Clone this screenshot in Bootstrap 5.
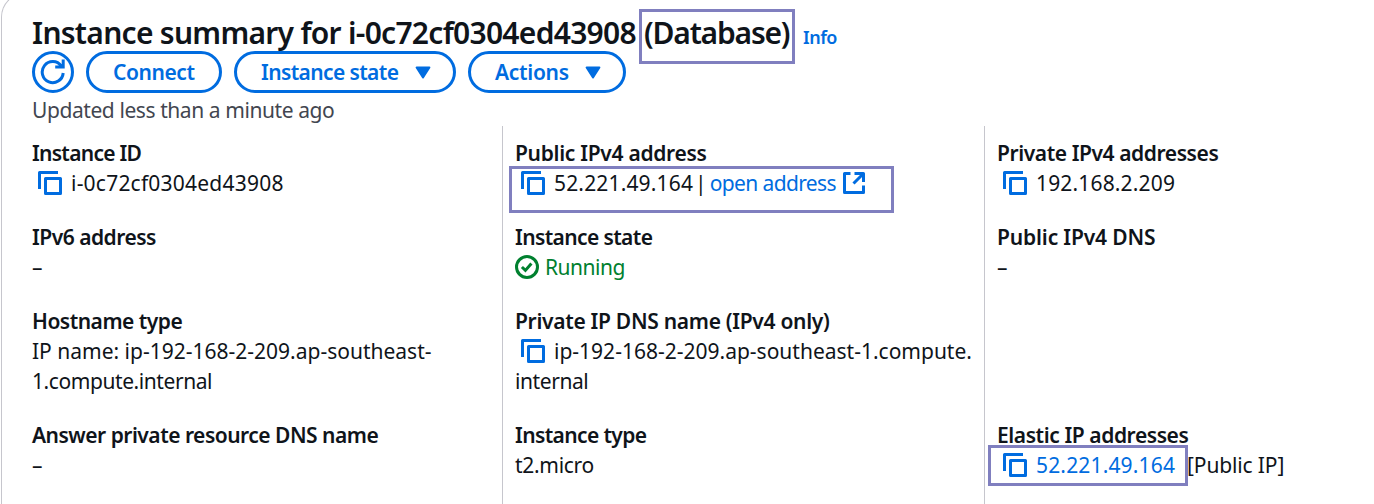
<!DOCTYPE html>
<html lang="en">
<head>
<meta charset="utf-8">
<meta name="viewport" content="width=device-width, initial-scale=1">
<title>Instance summary</title>
<link href="https://cdn.jsdelivr.net/npm/bootstrap@5.3.0/dist/css/bootstrap.min.css" rel="stylesheet">
<style>
  :root { --link: #006ce0; --ink: #0f141a; --rule: #c6c6cd; --mark: #807fbf; }
  body { font-family: "Noto Sans", sans-serif; font-size: 21px; line-height: 30px; color: var(--ink); background: #fff; }
  .panel { margin: -7px 0 0 1px; height: 511px; border: 1px solid var(--rule); border-width: 1px 0 0 1px; border-radius: 24px 0 0 0; padding: 21px 0 0 30px; }
  .panel h1 { font-size: 30px; line-height: 36px; height: 36px; font-weight: 600; white-space: nowrap; }
  .panel a { color: var(--link); text-decoration: none; }
  .title { width: 612px; }
  .dbname { width: 146px; }
  .info { font-size: 18px; font-weight: 600; margin-left: 13px; }
  .toolbar { gap: 12px; }
  .btn-pill { --bs-btn-color: var(--link); --bs-btn-border-color: var(--link); --bs-btn-border-width: 3px; --bs-btn-border-radius: 21px; --bs-btn-font-weight: 600; --bs-btn-font-size: 21px; --bs-btn-padding-x: 24px; --bs-btn-padding-y: 0; height: 42px; line-height: 30px; white-space: nowrap; display: inline-flex; align-items: center; }
  .btn-pill.justify-content-between { padding-right: 22px; }
  .btn-round { width: 42px; --bs-btn-padding-x: 0; justify-content: center; }
  .btn-round svg { flex: none; }
  .w-connect { width: 136px; }
  .w-state { width: 222px; }
  .w-actions { width: 158px; }
  .updated { color: #424650; margin: 2px 0 1px; }
  .grid-row { display: grid; grid-template-columns: 470px 482px 1fr; }
  .grid-row .cell { padding-bottom: 24px; white-space: nowrap; }
  .cell + .cell { border-left: 1px solid var(--rule); padding-left: 12px; }
  .grid-row:first-child .cell { padding-top: 12px; }
  .grid-row:last-child .cell { padding-bottom: 24px; }
  .term { font-weight: 600; }
  .copy { width: 24px; height: 24px; margin: 0 9px 0 6px; flex: none; }
  .ok { color: #00802f; }
  .run { margin-left: 6px; }
  .bar { margin: 0 3px 0 2px; }
  .ext { margin-left: 7px; }
  .pub { margin-left: 12px; }
  .boxed { position: relative; }
  .boxed::after { content: ""; position: absolute; border: 3px solid var(--mark); pointer-events: none; }
  .box-name::after { left: -5px; top: -6px; width: 156px; height: 55px; }
  .box-ip::after { left: -6px; top: -2px; width: 385px; height: 47px; }
  .box-eip::after { left: -9px; top: -5px; width: 200px; height: 41px; }
  .t0 { letter-spacing: -1.2px } .t1 { letter-spacing: -.72px } .t2 { letter-spacing: -.62px }
  .t3 { letter-spacing: -.5px } .t4 { letter-spacing: -.42px } .t5 { letter-spacing: -.3px }
  .t6 { letter-spacing: -.14px } .t7 { letter-spacing: .16px } .t8 { letter-spacing: .22px }
</style>
</head>
<body>
<svg class="d-none">
  <symbol id="i-copy" viewBox="0 0 24 24"><path d="M1.5 18V1.5H20" fill="none" stroke="#006ce0" stroke-width="3" stroke-linejoin="round"/><rect x="7.5" y="7.5" width="15" height="15" fill="none" stroke="#006ce0" stroke-width="3" stroke-linejoin="round"/></symbol>
  <symbol id="i-caret" viewBox="0 0 16 13"><path d="M1.6 1.5h12.8L8 11.5z" fill="#006ce0" stroke="#006ce0" stroke-width="2" stroke-linejoin="round"/></symbol>
</svg>
<main class="panel">
  <h1 class="d-flex align-items-baseline mb-0"><span class="t1 title">Instance summary for i-0c72cf0304ed43908</span><span class="boxed box-name t0 dbname">(Database)</span><a href="#" class="info t3">Info</a></h1>
  <div class="d-flex toolbar">
    <button class="btn btn-pill btn-round" aria-label="Refresh"><svg width="26" height="26" viewBox="0 0 26 26" fill="none" stroke="#006ce0" stroke-width="3"><path d="M23.2 14A10.5 10.5 0 1 1 21.3 7M23.2.5V8H15.2"/></svg></button>
    <button class="btn btn-pill w-connect"><span class="t4">Connect</span></button>
    <button class="btn btn-pill w-state justify-content-between"><span class="t2">Instance state</span><svg width="16" height="13"><use href="#i-caret"/></svg></button>
    <button class="btn btn-pill w-actions justify-content-between"><span class="t5">Actions</span><svg width="16" height="13"><use href="#i-caret"/></svg></button>
  </div>
  <div class="updated t4">Updated less than a minute ago</div>
  <section>
    <div class="grid-row">
      <div class="cell"><div class="term t1">Instance ID</div><div class="d-flex align-items-center"><svg class="copy"><use href="#i-copy"/></svg><span class="t8">i-0c72cf0304ed43908</span></div></div>
      <div class="cell"><div class="term t5">Public IPv4 address</div><div class="d-flex align-items-center boxed box-ip"><svg class="copy"><use href="#i-copy"/></svg><span class="t7">52.221.49.164</span><span class="bar">|</span><a href="#" class="t2">open address</a><svg class="ext" width="22" height="22" viewBox="0 0 22 22" fill="none" stroke="#006ce0" stroke-width="3" stroke-linejoin="round"><path d="M7.5 1.5h-6v19h19v-7M11.5 1.5h9V10M20 2l-9.5 9.5"/></svg></div></div>
      <div class="cell"><div class="term t4">Private IPv4 addresses</div><div class="d-flex align-items-center"><svg class="copy"><use href="#i-copy"/></svg><span class="t7">192.168.2.209</span></div></div>
    </div>
    <div class="grid-row">
      <div class="cell"><div class="term t3">IPv6 address</div><div>–</div></div>
      <div class="cell"><div class="term t2">Instance state</div><div class="d-flex align-items-center ok"><svg width="24" height="24" viewBox="0 0 24 24" fill="none" stroke="currentColor" stroke-width="3"><circle cx="12" cy="12" r="10.5"/><path d="m6.9 12 3.5 3.4 6-7"/></svg><span class="t3 run">Running</span></div></div>
      <div class="cell"><div class="term t6">Public IPv4 DNS</div><div>–</div></div>
    </div>
    <div class="grid-row">
      <div class="cell"><div class="term t3">Hostname type</div><div>IP name: ip-192-168-2-209.ap-southeast-<br><span class="t4">1.compute.internal</span></div></div>
      <div class="cell"><div class="term t5">Private IP DNS name (IPv4 only)</div><div class="d-flex align-items-center"><svg class="copy"><use href="#i-copy"/></svg><span>ip-192-168-2-209.ap-southeast-1.compute.</span></div><div class="t4">internal</div></div>
      <div class="cell"></div>
    </div>
    <div class="grid-row">
      <div class="cell"><div class="term t3">Answer private resource DNS name</div><div>–</div></div>
      <div class="cell"><div class="term t2">Instance type</div><div class="t5">t2.micro</div></div>
      <div class="cell"><div class="term t4">Elastic IP addresses</div><div class="d-flex align-items-center boxed box-eip"><svg class="copy"><use href="#i-copy"/></svg><a href="#" class="t7">52.221.49.164</a><span class="t6 pub">[Public IP]</span></div></div>
    </div>
  </section>
</main>
<script src="https://cdn.jsdelivr.net/npm/bootstrap@5.3.0/dist/js/bootstrap.bundle.min.js"></script>
</body>
</html>
